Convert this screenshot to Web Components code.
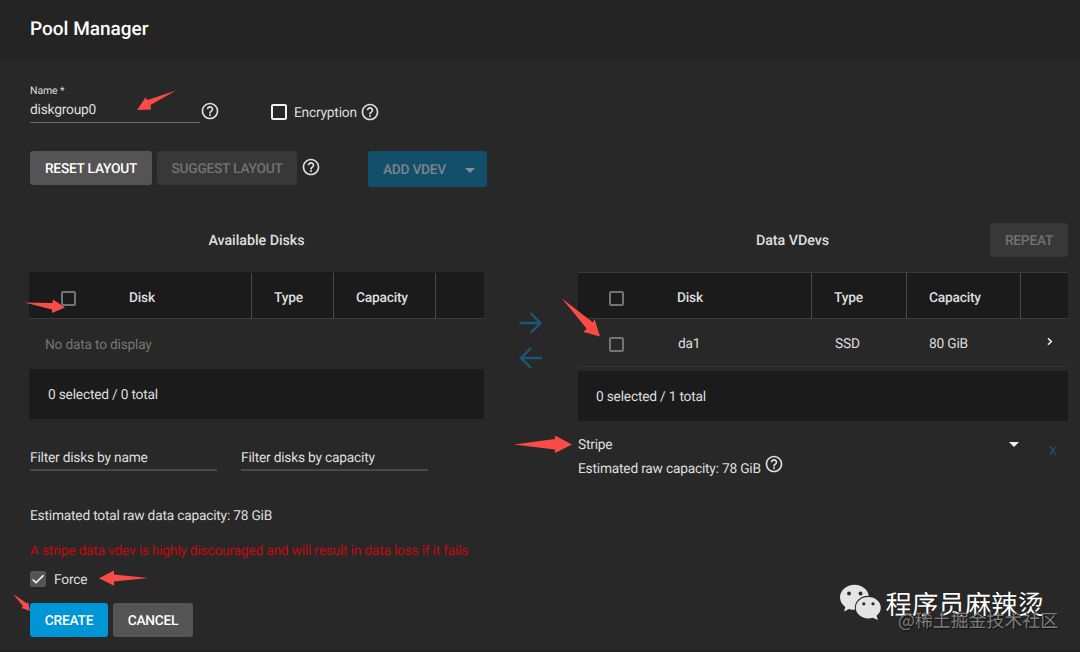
<!DOCTYPE html>
<html lang="en">
<head>
<meta charset="utf-8">
<title>Pool Manager</title>
<style>
html, body {
    margin: 0;
    height: 100%;
    overflow: hidden;
    background: #282828;
}
</style>
</head>
<body>
<pool-manager></pool-manager>

<script>
// ---- small pieces ----

class HelpIcon extends HTMLElement {
    constructor() {
        super();
        this.attachShadow({mode: 'open'});
        this.shadowRoot.innerHTML = `
<style>
:host { display: block; flex: none; width: 20px; height: 20px; }
svg { display: block; fill: currentColor; }
</style>
<svg width="20" height="20" viewBox="0 0 24 24"><path d="M11 18h2v-2h-2v2zm1-16C6.48 2 2 6.48 2 12s4.48 10 10 10 10-4.48 10-10S17.52 2 12 2zm0 18c-4.41 0-8-3.59-8-8s3.59-8 8-8 8 3.59 8 8-3.59 8-8 8zm0-14c-2.21 0-4 1.79-4 4h2c0-1.1.9-2 2-2s2 .9 2 2c0 2-3 1.75-3 5h2c0-2.25 3-2.5 3-5 0-2.21-1.79-4-4-4z"/></svg>`;
    }
}

class CheckBox extends HTMLElement {
    constructor() {
        super();
        this.attachShadow({mode: 'open'});
        this.shadowRoot.innerHTML = `
<style>
:host { display: flex; align-items: center; gap: 7px; --edge: #737373; }
:host([bright]) { --edge: #f2f2f2; }
.box {
    box-sizing: border-box;
    flex: none;
    width: 16px;
    height: 16px;
    border: 2px solid var(--edge);
    border-radius: 2px;
}
.text { padding-top: 2px; }
:host([checked]) { gap: 8px; }
:host([checked]) .box { border: none; background: #545454; }
:host(:not([bright]):not([checked])) .box { width: 15px; height: 15px; }
:host(:not([bright]):not([checked])) .text { display: none; }
svg { display: none; }
:host([checked]) svg { display: block; }
</style>
<span class="box"><svg width="16" height="16" viewBox="0 0 24 24"><path d="M4.1 12.7L9 17.6 20.3 6.3" fill="none" stroke="#fff" stroke-width="2.4"/></svg></span>
<span class="text"><slot></slot></span>`;
    }
}

class PoolButton extends HTMLElement {
    constructor() {
        super();
        this.attachShadow({mode: 'open'});
        this.shadowRoot.innerHTML = `
<style>
:host {
    display: flex;
    align-items: center;
    justify-content: center;
    box-sizing: border-box;
    flex: none;
    height: 34px;
    padding-top: 2px;
    border-radius: 3px;
    background: #545454;
    color: #fff;
    font-weight: 500;
    letter-spacing: -0.25px;
    white-space: nowrap;
    cursor: pointer;
}
:host([kind="primary"]) { background: #0095d5; }
:host([kind="menu"]) {
    height: 36px;
    background: #124f6b;
    color: #7e8589;
    justify-content: space-between;
    padding: 2px 12px 0 15px;
}
:host([disabled]) { background: #383838; color: #727272; cursor: default; }
</style>
<slot></slot>`;
    }
}

class TextField extends HTMLElement {
    constructor() {
        super();
        this.attachShadow({mode: 'open'});
        this.shadowRoot.innerHTML = `
<style>
:host { display: block; box-sizing: border-box; }
.label { font-size: 10.5px; letter-spacing: -0.1px; line-height: 14px; height: 14px; }
.value { line-height: 18px; height: 18px; padding-top: 3px; }
.line { height: 1px; background: #6a6a6a; margin-top: 3px; }
:host(:not([label])) .label { display: none; }
:host(:not([label])) .value { padding-top: 1px; }
:host(:not([label])) .line { height: 2px; background: #4a4a4a; margin-top: 2px; }
</style>
<div class="label"></div>
<div class="value"><slot></slot></div>
<div class="line"></div>`;
        this.shadowRoot.querySelector('.label').textContent = this.getAttribute('label') || '';
    }
}

// ---- disk table: header, slotted rows, footer ----

class DiskTable extends HTMLElement {
    constructor() {
        super();
        this.attachShadow({mode: 'open'});
        this.shadowRoot.innerHTML = `
<style>
:host { display: block; }
.head {
    display: grid;
    grid-template-columns: var(--cols);
    box-sizing: border-box;
    height: 47px;
    background: #1b1b1b;
    border-top: 1px solid var(--top-line, #1b1b1b);
    border-bottom: 1px solid #3c3c3c;
    font-weight: 500;
}
.head > div {
    display: flex;
    align-items: center;
    padding-top: 5px;
    border-left: 1px solid #4a4a4a;
}
.head > div:nth-child(-n+2) { border-left: none; }
.head > .check { padding: 6px 0 0 var(--check-pad); }
.foot {
    display: flex;
    align-items: center;
    box-sizing: border-box;
    height: 50px;
    padding: var(--foot-drop) 0 0 var(--foot-pad);
    background: #1b1b1b;
}
</style>
<div class="head">
    <div class="check"><check-box></check-box></div>
    <div>Disk</div>
    <div style="padding-left: 22px">Type</div>
    <div style="padding-left: 22px">Capacity</div>
    <div></div>
</div>
<slot></slot>
<div class="foot"><slot name="summary"></slot></div>`;
    }
}

class DiskRow extends HTMLElement {
    constructor() {
        super();
        this.attachShadow({mode: 'open'});
        this.shadowRoot.innerHTML = `
<style>
:host {
    display: grid;
    grid-template-columns: var(--cols);
    align-items: center;
    box-sizing: border-box;
    height: 48px;
    margin-bottom: 4px;
    border-bottom: 1px solid #333;
}
.cell { padding-top: 2px; }
.check { padding: 4px 0 0 var(--check-pad); }
.more { display: flex; justify-content: flex-end; padding: 0 15px 2px 0; }
</style>
<div class="check"><check-box></check-box></div>
<div class="cell" style="padding-left: 1px"><slot name="disk"></slot></div>
<div class="cell" style="padding-left: 24px"><slot name="type"></slot></div>
<div class="cell" style="padding-left: 23px"><slot name="capacity"></slot></div>
<div class="more"><svg width="6" height="9" viewBox="0 0 6 9"><path d="M1 1.2l3.3 3.3L1 7.8" fill="none" stroke="#eee" stroke-width="1.6"/></svg></div>`;
    }
}

// ---- red pointer arrows drawn over the form ----

class PointerMarks extends HTMLElement {
    constructor() {
        super();
        this.attachShadow({mode: 'open'});
        this.shadowRoot.innerHTML = `
<style>
:host { position: absolute; inset: 0; pointer-events: none; }
svg { display: block; fill: #fb4b45; }
</style>
<svg width="1080" height="652" viewBox="0 0 1080 652">
    <path d="M176 90.500L150.500 105l.5 4.500-14 .5L145.500 97.500l2 2.500z"/>
    <path d="M24.500 302.500L52.500 303l.5-3.500L65 307.500 52 313v-3.500z"/>
    <path d="M562 298.500L593 322.500l1.500-3.500L600 336.500 583.500 332l3-3.500z"/>
    <path d="M514 444.500L555 439v-3.500L572 444.500 555 453v-3.500z"/>
    <path d="M148.500 578L114 574.500v-4L99 578.200 114 585.800V581.500z"/>
    <path d="M13 594L27 603.500l1-1.500L30 611l-8.500-3 1.500-2z"/>
</svg>`;
    }
}

class AccountMark extends HTMLElement {
    constructor() {
        super();
        this.attachShadow({mode: 'open'});
        this.shadowRoot.innerHTML = `
<style>
:host { position: absolute; left: 839px; top: 583px; width: 230px; height: 60px; font-family: "Noto Sans CJK SC", sans-serif; letter-spacing: 0; white-space: nowrap; }
svg { position: absolute; left: 0; top: 0; }
.name { position: absolute; left: 46.5px; top: 1px; font-size: 26.4px; line-height: 38px; color: #fff; text-shadow: 0 0 1px #000; }
.site { position: absolute; left: 59px; top: 25px; font-size: 17.9px; line-height: 24px; color: #7d7d7d; text-shadow: 1px 1px 1px #111; }
</style>
<svg width="44" height="38" viewBox="0 0 44 38">
    <path d="M15.500 1.700C7.500 1.700 1 7.300 1 14.300c0 4 2 7.300 5.300 9.700L5 28.500l5-2.600c1.800.6 3.600.9 5.500.9 8 0 14.500-5.500 14.500-12.500S23.500 1.700 15.500 1.700z" fill="#e4e4e4"/>
    <ellipse cx="29.300" cy="24.600" rx="13.500" ry="11.900" fill="#282828"/>
    <path d="M29.300 14c-7 0-12.500 4.800-12.500 10.700s5.500 10.700 12.500 10.700c1.500 0 3-.2 4.300-.7l5.400 2.400-1.500-4.400c2.600-2 4.300-4.800 4.300-8C41.800 18.800 36.300 14 29.300 14z" fill="#e4e4e4"/>
    <g fill="#282828"><circle cx="10" cy="10.500" r="1.900"/><circle cx="21.500" cy="10.500" r="1.900"/><circle cx="24.800" cy="20.800" r="1.600"/><circle cx="34" cy="20.800" r="1.600"/></g>
</svg>
<div class="name">程序员麻辣烫</div>
<div class="site">@稀土掘金技术社区</div>`;
    }
}

// ---- page ----

class PoolManager extends HTMLElement {
    constructor() {
        super();
        this.attachShadow({mode: 'open'});
        this.shadowRoot.innerHTML = `
<style>
:host {
    display: block;
    position: relative;
    box-sizing: border-box;
    width: 1080px;
    height: 652px;
    overflow: hidden;
    background: #282828;
    border-bottom: 2px solid #202020;
    color: #dedede;
    font-family: Roboto, sans-serif;
    font-size: 13.75px;
    letter-spacing: -0.21px;
    line-height: 18px;
    text-rendering: geometricPrecision;
}
header {
    display: flex;
    align-items: center;
    box-sizing: border-box;
    height: 60px;
    padding: 0 30px 3px;
    background: #242424;
    color: #fff;
    font-size: 19px;
    font-weight: 500;
    letter-spacing: 0;
}
.row { display: flex; }
.fields { height: 91px; padding: 24px 0 0 30px; box-sizing: border-box; }
.fields text-field { width: 170px; }
.fields help-icon { margin-top: 17px; }
.fields check-box { margin: 19px 3px 0 51px; height: 18px; }
.actions { padding-left: 30px; height: 72px; box-sizing: border-box; }
.actions help-icon { margin: 6px 0 0 4px; }
.columns { display: grid; grid-template-columns: 455px 94px 490px; padding-left: 29px; height: 282px; }
.title { display: flex; align-items: center; justify-content: center; height: 34px; margin-bottom: 15px; font-weight: 500; }
.title span { padding-top: 2px; font-size: 14.3px; letter-spacing: -0.05px; }
.right .title { display: grid; grid-template-columns: 1fr 78px; text-align: center; }
.right .title span { padding-left: 17px; }
.left disk-table { --cols: 100px 122px 82px 102px 49px; --check-pad: 32px; --foot-pad: 19px; --foot-drop: 2px; }
.right disk-table { --cols: 99px 134px 95px 114px 48px; --check-pad: 31px; --foot-pad: 18px; --foot-drop: 1px; --top-line: #3a3a3a; }
.empty { height: 50px; line-height: 52px; padding-left: 16px; color: #757575; }
.filters { gap: 24px; padding: 29px 0 0 1px; }
.filters text-field { width: 187px; }
.moves { display: flex; flex-direction: column; align-items: center; gap: 9px; padding-top: 87px; }
.vdev { display: grid; grid-template-columns: 1fr 10px 49px; padding-top: 15px; height: 18px; }
.vdev svg { margin-top: 6px; }
.vdev .x { color: #1d5573; padding: 7px 0 0 30px; font-size: 12.8px; }
.raw { align-items: flex-start; gap: 3px; padding-top: 2px; }
.raw span { padding-top: 4px; }
.raw help-icon { margin-top: -2px; }
.end { padding: 2px 0 0 30px; }
.end p { margin: 0; height: 35px; }
.end .warn { color: #c4090c; height: 28px; }
.end check-box { height: 18px; margin-bottom: 15px; }
.end .row { gap: 5px; }
</style>
<header>Pool Manager</header>
<div class="row fields">
    <text-field label="Name *">diskgroup0</text-field>
    <help-icon></help-icon>
    <check-box bright>Encryption</check-box>
    <help-icon style="margin-top:18px"></help-icon>
</div>
<div class="row actions">
    <pool-button style="width:122px">RESET LAYOUT</pool-button>
    <pool-button disabled style="width:140px;margin-left:5px">SUGGEST LAYOUT</pool-button>
    <help-icon></help-icon>
    <pool-button kind="menu" style="width:119px;margin-left:47px">ADD VDEV<svg width="10" height="5" viewBox="0 0 10 5"><path d="M0 0h10L5 5z" fill="#8b8b87"/></svg></pool-button>
</div>
<div class="columns">
    <section class="left">
        <div class="title"><span>Available Disks</span></div>
        <disk-table>
            <div class="empty">No data to display</div>
            <span slot="summary">0 selected / 0 total</span>
        </disk-table>
        <div class="row filters">
            <text-field>Filter disks by name</text-field>
            <text-field>Filter disks by capacity</text-field>
        </div>
    </section>
    <div class="moves">
        <svg width="26" height="26" viewBox="0 0 26 26"><path d="M1.500 13h21M12.500 3L22.500 13 12.500 23" fill="none" stroke="#195975" stroke-width="2.400"/></svg>
        <svg width="26" height="26" viewBox="0 0 26 26"><path d="M24 13H3M13 3L3 13 13 23" fill="none" stroke="#195975" stroke-width="2.400"/></svg>
    </div>
    <section class="right">
        <div class="title"><span>Data VDevs</span><pool-button disabled>REPEAT</pool-button></div>
        <disk-table>
            <disk-row>
                <span slot="disk">da1</span>
                <span slot="type">SSD</span>
                <span slot="capacity">80 GiB</span>
            </disk-row>
            <span slot="summary">0 selected / 1 total</span>
        </disk-table>
        <div class="vdev"><span>Stripe</span><svg width="10" height="5" viewBox="0 0 10 5"><path d="M0 0h10L5 5z" fill="#f0f0f0"/></svg><span class="x">X</span></div>
        <div class="row raw"><span>Estimated raw capacity: 78 GiB</span><help-icon></help-icon></div>
    </section>
</div>
<div class="end">
    <p>Estimated total raw data capacity: 78 GiB</p>
    <p class="warn">A stripe data vdev is highly discouraged and will result in data loss if it fails</p>
    <check-box checked>Force</check-box>
    <div class="row">
        <pool-button kind="primary" style="width:78px">CREATE</pool-button>
        <pool-button style="width:80px">CANCEL</pool-button>
    </div>
</div>
<account-mark></account-mark>
<pointer-marks></pointer-marks>`;
    }
}

window.customElements.define('help-icon', HelpIcon);
window.customElements.define('check-box', CheckBox);
window.customElements.define('pool-button', PoolButton);
window.customElements.define('text-field', TextField);
window.customElements.define('disk-table', DiskTable);
window.customElements.define('disk-row', DiskRow);
window.customElements.define('pointer-marks', PointerMarks);
window.customElements.define('account-mark', AccountMark);
window.customElements.define('pool-manager', PoolManager);
</script>
</body>
</html>
